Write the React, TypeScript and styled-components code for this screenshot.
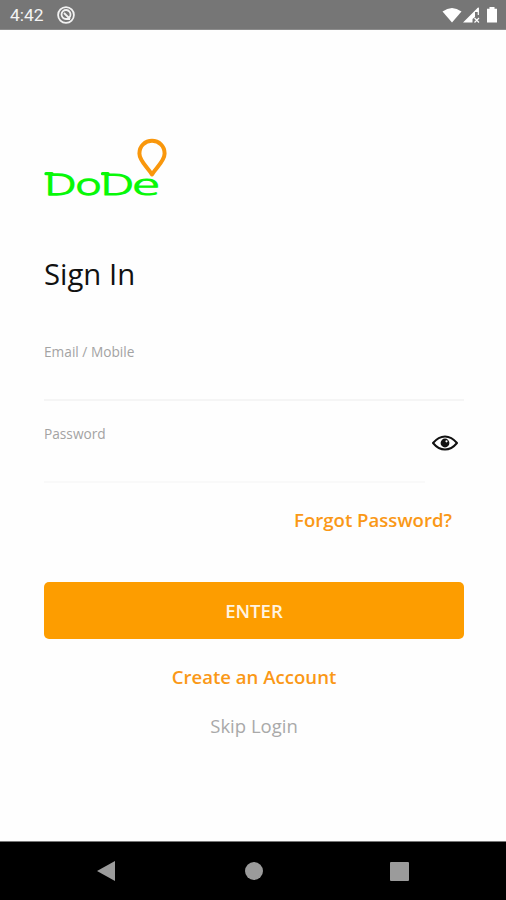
import React from "react";
import styled, { createGlobalStyle } from "styled-components";

const GlobalStyle = createGlobalStyle`
  * { box-sizing: border-box; }
  body { margin: 0; background: #fefefe; font-family: "Open Sans", sans-serif; }
`;

const Screen = styled.div`
  width: 506px;
  height: 900px;
  display: flex;
  flex-direction: column;
  background: #fefefe;
  overflow: hidden;
`;

const StatusBar = styled.header`
  height: 30px;
  flex: none;
  display: flex;
  align-items: center;
  padding: 0 7px 0 10px;
  background: #767676;
  border-bottom: 1px solid #8c8c8c;
`;

const Clock = styled.span`
  width: 46px;
  font: 400 17.4px/30px Roboto, sans-serif;
  color: #f4f4f4;
`;

const StatusIcons = styled.div`
  margin-left: auto;
  display: flex;
`;

const Content = styled.main`
  flex: 1;
  display: flex;
  flex-direction: column;
  padding: 108px 42px 0 44px;
`;

const Logo = styled.svg`
  display: block;
  flex: none;
  overflow: visible;
  font-family: "Open Sans", sans-serif;
  font-weight: 300;
`;

const LogoLetter = styled.text`
  font-size: 30px;
  fill: #08f808;
  stroke: #08f808;
  stroke-width: 1.6px;
  stroke-linejoin: round;
  vector-effect: non-scaling-stroke;
`;

const Title = styled.h1`
  margin: 42px 0 0;
  font-size: 29.3px;
  line-height: 40px;
  font-weight: 400;
  color: #111;
`;

const Field = styled.div<{ $gap: number }>`
  display: flex;
  margin-top: ${(p) => p.$gap}px;
  height: 59px;
`;

const FieldBody = styled.div<{ $line: string }>`
  flex: 1;
  border-bottom: 2px solid ${(p) => p.$line};
`;

const Label = styled.label`
  display: block;
  font-size: 13.7px;
  line-height: 20px;
  color: #a3a3a3;
`;

const EyeButton = styled.button`
  width: 39px;
  height: 38px;
  padding: 0 0 0 6px;
  display: flex;
  align-items: center;
  border: 0;
  background: none;
`;

const TextLink = styled.a<{ $tone: string; $weight: number; $top: number; $size: number }>`
  display: block;
  align-self: center;
  margin-top: ${(p) => p.$top}px;
  font-size: ${(p) => p.$size}px;
  line-height: 26px;
  font-weight: ${(p) => p.$weight};
  color: ${(p) => p.$tone};
`;

const ForgotLink = styled(TextLink)`
  align-self: flex-end;
  margin-right: 12px;
`;

const EnterButton = styled.button`
  flex: none;
  height: 57px;
  margin-top: 49px;
  padding: 0;
  border: 0;
  border-radius: 5px;
  background: #fd9d00;
  color: #fff4e2;
  font: 600 18.6px/57px "Open Sans", sans-serif;
`;

const NavBar = styled.nav`
  height: 59px;
  flex: none;
  display: grid;
  grid-template-columns: 212px 83px 1fr;
  align-items: center;
  background: #000;
  border-top: 1px solid #777;
`;

const NavItem = styled.div<{ $left: number }>`
  display: flex;
  padding-left: ${(p) => p.$left}px;
`;

function DodeLogo() {
  return (
    <Logo width="130" height="74" viewBox="44 138 130 74" role="img">
      <LogoLetter transform="translate(44.5 194.6) scale(1.5 1)">D</LogoLetter>
      <LogoLetter transform="translate(75.6 195.2) scale(1.48 1)">o</LogoLetter>
      <LogoLetter transform="translate(100.6 194.6) scale(1.58 1)">D</LogoLetter>
      <LogoLetter transform="translate(132.2 195.2) scale(1.68 1)">e</LogoLetter>
      <path d="M46 173.700H52M102.500 173.700H108" stroke="#08f808" strokeWidth="3.300" strokeLinecap="round" />
      <path d="M152 174.500C148 167.500 139.400 161.200 139.400 153.400C139.400 146 145 140.800 152 140.800S164.600 146 164.600 153.400C164.600 161.200 156 167.500 152 174.500Z" fill="none" stroke="#f9970c" strokeWidth="4" strokeLinejoin="round" />
    </Logo>
  );
}

export default function App() {
  return (
    <>
      <GlobalStyle />
      <Screen>
        <StatusBar>
          <Clock>4:42</Clock>
          <svg width="20" height="20" viewBox="0 0 20 20" fill="none" stroke="#f2f2f2">
            <circle cx="10" cy="10" r="7.900" strokeWidth="1.800" />
            <path d="M14 14H10A4.500 4.500 0 1 1 14.500 10A4.500 4.500 0 0 1 12.500 13.500M8 8L14 14" strokeWidth="1.800" />
          </svg>
          <StatusIcons>
            <svg width="58" height="22" viewBox="441 4 58 22">
              <path d="M442.500 11.500Q452 4.500 461.500 11.500L452 22.500Z" fill="#fff" />
              <path d="M463 22.500L478.500 7V12H475V17L472.500 19V22.500Z" fill="#fff" />
              <path d="M474.500 18L479 22.500M479 18L474.500 22.500M478.300 8V15" stroke="#fff" strokeWidth="1.200" />
              <path d="M489.500 7H494.500V8.700H497V22.500H487V8.700H489.500Z" fill="#fff" />
            </svg>
          </StatusIcons>
        </StatusBar>
        <Content>
          <DodeLogo />
          <Title>Sign In</Title>
          <Field $gap={48}>
            <FieldBody $line="#f5f5f5"><Label>Email / Mobile</Label></FieldBody>
          </Field>
          <Field $gap={23}>
            <FieldBody $line="#f9f9f9"><Label>Password</Label></FieldBody>
            <EyeButton aria-label="Show password">
              <svg width="28" height="20" viewBox="0 0 28 20">
                <path d="M2 10Q7.500 3.400 14 3.400T26 10Q20.500 16.600 14 16.600T2 10Z" fill="none" stroke="#111" strokeWidth="2" strokeLinejoin="round" />
                <circle cx="14" cy="10" r="4.400" fill="#111" />
                <circle cx="15.500" cy="8.300" r="1.100" fill="#fff" />
              </svg>
            </EyeButton>
          </Field>
          <ForgotLink $tone="#fa9816" $weight={600} $top={24} $size={18.6}>Forgot Password?</ForgotLink>
          <EnterButton>ENTER</EnterButton>
          <TextLink $tone="#fa9816" $weight={600} $top={25} $size={18.6}>Create an Account</TextLink>
          <TextLink $tone="#a9a9a9" $weight={400} $top={23} $size={18.5}>Skip Login</TextLink>
        </Content>
        <NavBar>
          <NavItem $left={96}>
            <svg width="20" height="22"><path d="M1 11L19 1V21Z" fill="#9b9b9b" /></svg>
          </NavItem>
          <NavItem $left={32}>
            <svg width="20" height="20"><circle cx="10" cy="10" r="9" fill="#9b9b9b" /></svg>
          </NavItem>
          <NavItem $left={94}>
            <svg width="21" height="21"><rect x="1" y="1" width="19" height="19" rx="1" fill="#9b9b9b" /></svg>
          </NavItem>
        </NavBar>
      </Screen>
    </>
  );
}
